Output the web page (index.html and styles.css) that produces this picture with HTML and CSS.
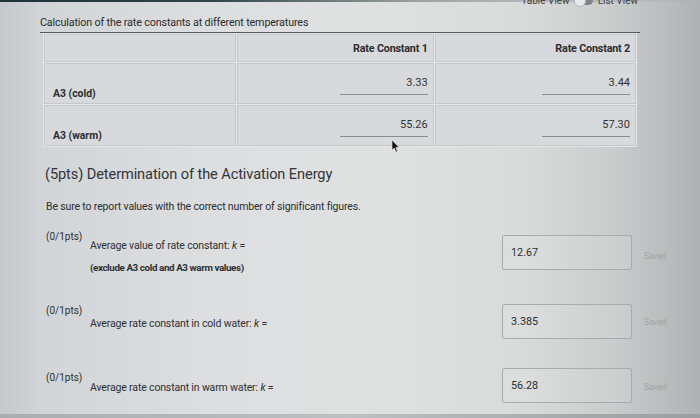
FILE: index.html
```html
<!DOCTYPE html>
<html>
<head>
<meta charset="utf-8">
<link rel="stylesheet" href="styles.css">
</head>
<body>
<div class="topbar"></div>
<div class="page">
  <div class="viewtoggle">
    <span>Table View</span>
    <span class="switch"><span class="knob"></span></span>
    <span>List View</span>
  </div>
  <div class="tabletitle">Calculation of the rate constants at different temperatures</div>
  <table class="rates">
    <tr class="head">
      <td class="c1"></td>
      <td class="c2">Rate Constant 1</td>
      <td class="c3">Rate Constant 2</td>
    </tr>
    <tr class="data">
      <td class="c1 label">A3 (cold)</td>
      <td class="c2"><span class="val">3.33</span></td>
      <td class="c3"><span class="val">3.44</span></td>
    </tr>
    <tr class="data">
      <td class="c1 label">A3 (warm)</td>
      <td class="c2"><span class="val">55.26</span></td>
      <td class="c3"><span class="val">57.30</span></td>
    </tr>
  </table>
  <h2 class="section">(5pts) Determination of the Activation Energy</h2>
  <p class="note">Be sure to report values with the correct number of significant figures.</p>

  <div class="q q1">
    <div class="pts">(0/1pts)</div>
    <div class="qlabel">
      <div>Average value of rate constant: <i>k</i> =</div>
      <div class="bold">(exclude A3 cold and A3 warm values)</div>
    </div>
    <div class="answer">12.67</div>
    <div class="saved">Saved</div>
  </div>

  <div class="q q2">
    <div class="pts">(0/1pts)</div>
    <div class="qlabel">
      <div>Average rate constant in cold water: <i>k</i> =</div>
    </div>
    <div class="answer">3.385</div>
    <div class="saved">Saved</div>
  </div>

  <div class="q q3">
    <div class="pts">(0/1pts)</div>
    <div class="qlabel">
      <div>Average rate constant in warm water: <i>k</i> =</div>
    </div>
    <div class="answer">56.28</div>
    <div class="saved">Saved</div>
  </div>
</div>
<svg class="cursor" width="9" height="13" viewBox="0 0 9 13"><path d="M1 0 L1 10 L3.2 8 L5 12 L6.5 11.3 L4.8 7.5 L8 7.5 Z" fill="#111" stroke="#eee" stroke-width="0.6"/></svg>
<div class="bottombar"></div>
</body>
</html>
```
FILE: styles.css
```css
html, body {
  margin: 0;
  padding: 0;
}
body {
  width: 700px;
  height: 418px;
  overflow: hidden;
  position: relative;
  font-family: Roboto, "Liberation Sans", sans-serif;
  color: #2b2d2f;
  background: linear-gradient(90deg, #c4c7cb 0%, #d2d5d8 6%, #dcdee0 30%, #dfe1e1 55%, #d9dbdb 75%, #c9cccc 88%, #aeb2b2 100%);
}
.topbar {
  height: 2px;
  background: linear-gradient(90deg, #1f3136 0%, #2f4448 30%, rgba(60,70,72,0.4) 60%, rgba(0,0,0,0) 100%);
}
.bottombar {
  position: absolute;
  left: 0;
  right: 0;
  bottom: 0;
  height: 4px;
  background: linear-gradient(90deg, #a9adb0, #bdbfc0 50%, #9a9e9e);
}
.page {
  padding-left: 40px;
  width: 600px;
}
.viewtoggle {
  display: flex;
  justify-content: flex-end;
  align-items: center;
  gap: 5px;
  margin-top: -8px;
  height: 12px;
  font-size: 10px;
  color: #444;
  padding-right: 2px;
}
.switch {
  width: 18px;
  height: 9px;
  border-radius: 5px;
  background: #7f8486;
  position: relative;
}
.knob {
  position: absolute;
  left: -1px;
  top: -1px;
  width: 10px;
  height: 10px;
  border-radius: 50%;
  background: #e8e9ea;
  border: 1px solid #b5b8ba;
}
.tabletitle {
  margin-top: 10px;
  font-size: 10.75px;
  letter-spacing: -0.15px;
  line-height: 13px;
  color: #2a2c2e;
  padding-bottom: 3px;
  border-bottom: 1px solid #55595c;
}
.rates {
  width: 594px;
  margin-left: 3px;
  border-collapse: separate;
  border-spacing: 1px;
  background: #e3e5e6;
  font-size: 10px;
}
.rates td {
  border: 1px solid #c6c9cc;
  background: #d7d9dc;
  padding: 0 5px 0 8px;
}
.rates .c1 { width: 178px; }
.rates .c2 { width: 183px; text-align: right; }
.rates .c3 { width: 187px; text-align: right; }
.rates .head td {
  height: 28px;
  font-weight: bold;
  font-size: 10.8px;
  letter-spacing: -0.2px;
  vertical-align: top;
  padding-top: 7px;
  box-sizing: border-box;
}
.rates .data td {
  height: 41px;
  box-sizing: border-box;
}
.rates .label {
  vertical-align: bottom;
  padding-bottom: 3px;
  font-weight: bold;
  font-size: 10.4px;
}
.rates .data .c2, .rates .data .c3 {
  vertical-align: top;
  padding-top: 12px;
}
.val {
  display: inline-block;
  width: 88px;
  padding-bottom: 4px;
  border-bottom: 1px solid #8b8f92;
  color: #333;
  font-size: 11px;
  line-height: 14px;
}
.section {
  margin: 18px 0 0 5px;
  font-size: 14.6px;
  font-weight: normal;
  line-height: 19px;
  letter-spacing: -0.1px;
  color: #333538;
}
.note {
  margin: 17px 0 0 6px;
  font-size: 10.5px;
  line-height: 12px;
  letter-spacing: -0.15px;
  color: #2b2d2f;
}
.q {
  display: grid;
  grid-template-columns: 44px 412px 130px auto;
  align-items: start;
  margin-left: 6px;
}
.q1 { margin-top: 18px; }
.q2 { margin-top: 31px; }
.q3 { margin-top: 33px; }
.pts {
  font-size: 10px;
  line-height: 12px;
  color: #2d2f31;
}
.qlabel {
  padding-top: 9px;
  font-size: 10.5px;
  line-height: 12px;
  letter-spacing: -0.15px;
  color: #2e3032;
}
.q2 .qlabel { padding-top: 13px; }
.q3 .qlabel { padding-top: 10px; }
.qlabel .bold {
  font-weight: bold;
  font-size: 9.8px;
  letter-spacing: -0.4px;
  margin-top: 10px;
}
.answer {
  height: 35px;
  box-sizing: border-box;
  margin-top: 4px;
  border: 1px solid #a8acae;
  border-radius: 2px;
  padding: 0 8px;
  display: flex;
  align-items: center;
  font-size: 10.8px;
  color: #2c2e30;
  background: rgba(255,255,255,0.08);
}
.q2 .answer { margin-top: -1px; }
.q3 .answer { margin-top: -4px; }
.saved {
  margin: 20px 0 0 12px;
  font-size: 8.6px;
  line-height: 10px;
  letter-spacing: -0.2px;
  color: #a0a4a5;
}
.q2 .saved { margin-top: 12px; }
.q3 .saved { margin-top: 10px; }
.cursor {
  position: absolute;
  left: 391px;
  top: 140px;
}
```
